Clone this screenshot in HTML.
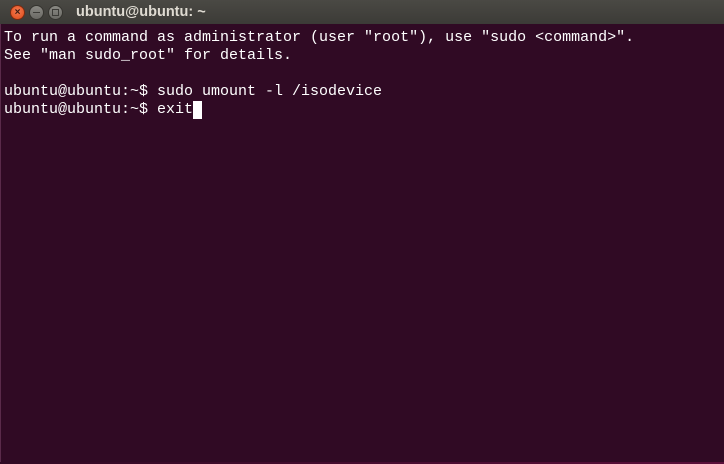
<!DOCTYPE html>
<html><head><style>
html,body{margin:0;padding:0;}
body{width:724px;height:464px;background:#300a24;position:relative;overflow:hidden;}
.tb{position:absolute;left:0;top:0;width:724px;height:24px;background:linear-gradient(#4a4944,#3c3b37);}
.btn{position:absolute;top:5px;width:15px;height:15px;border-radius:50%;box-sizing:border-box;}
.c{left:10px;background:radial-gradient(circle at 50% 40%,#f47a52,#df4a16);border:1px solid #7a2a10;color:#3a1a10;font:bold 10px "Liberation Sans",sans-serif;text-align:center;line-height:13px;}
.m{left:29px;background:linear-gradient(#8a8984,#6a6964);border:1px solid #35342f;}
.x{left:48px;background:linear-gradient(#8a8984,#6a6964);border:1px solid #35342f;}
.m:after{content:"";position:absolute;left:3px;top:6px;width:7px;height:1px;background:#3c3b37;}
.x:after{content:"";position:absolute;left:3px;top:3px;width:5px;height:5px;border:1px solid #3c3b37;}
.title{position:absolute;left:76px;top:4px;font:bold 14.5px "Liberation Sans",sans-serif;color:#dfdbd2;}
pre{position:absolute;left:4px;top:29px;margin:0;font:15px/18px "Liberation Mono",monospace;color:#fff;}
.cur{display:inline-block;width:9px;height:18px;background:#fff;vertical-align:top;}
.bl{position:absolute;left:0;top:24px;width:1px;height:440px;background:#5a2a4a;}
.bb{position:absolute;left:0;bottom:0;width:724px;height:2px;background:linear-gradient(90deg,#300a24,#5a0f3a);}
</style></head><body>
<div class="tb"></div>
<div class="btn c">×</div><div class="btn m"></div><div class="btn x"></div>
<div class="title">ubuntu@ubuntu: ~</div>
<div class="bl"></div><div class="bb"></div>
<pre>To run a command as administrator (user "root"), use "sudo &lt;command&gt;".
See "man sudo_root" for details.

ubuntu@ubuntu:~$ sudo umount -l /isodevice
ubuntu@ubuntu:~$ exit<span class="cur"></span></pre>
</body></html>
